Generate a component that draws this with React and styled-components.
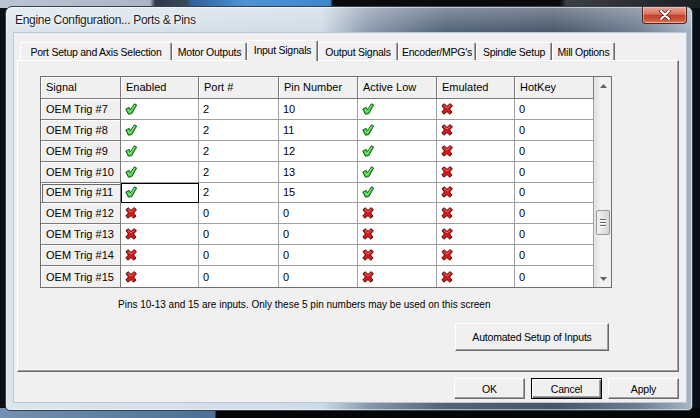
import styled, { createGlobalStyle } from 'styled-components'

const GlobalStyle = createGlobalStyle`
  html, body { margin: 0; padding: 0; }
  body {
    width: 700px;
    height: 418px;
    overflow: hidden;
    background: #0b0f16;
    font-family: "Liberation Sans", Arial, sans-serif;
  }
`

// the blurred desktop behind the dialog
const Desktop = styled.div`
  width: 700px;
  height: 418px;
  box-sizing: border-box;
  padding: 6px 0 0 5px;
  background:
    linear-gradient(to right, #b9c5d2 0, #a9b6c5 150px, #2e3a4a 155px, #3a475a 188px,
      #2f5f9a 190px, #4f93d4 245px, #3f86cc 330px, #0a0b0e 333px, #0a0a0c 560px,
      #3b3f46 566px, #1c1e22 700px) top / 100% 8px no-repeat,
    linear-gradient(to right, #7391b0 0, #4c6f96 215px, #050608 216px) bottom / 100% 10px no-repeat,
    #0b0f16;
`

const Window = styled.div`
  position: relative;
  width: 688px;
  height: 405px;
  box-sizing: border-box;
  display: flex;
  flex-direction: column;
  padding: 0 5px 7px 7px;
  border: 1px solid #34414f;
  border-radius: 7px 7px 5px 5px;
  background:
    linear-gradient(to bottom, rgba(255, 255, 255, 0.3), rgba(255, 255, 255, 0) 26px),
    linear-gradient(to right, #dbe5ee 0%, #cfdbe6 46%, #8797aa 53%, #526378 64%,
      #465669 80%, #6d7d90 92%, #a7b5c4 100%);
  box-shadow: inset 0 0 0 1px rgba(255, 255, 255, 0.5);
`

const TitleBar = styled.div`
  height: 25px;
  display: flex;
  align-items: center;
  padding-left: 2px;
  padding-top: 1px;
  font-size: 12px;
  letter-spacing: -0.3px;
  color: #1b1b1b;
  text-shadow: 0 0 6px #fff, 0 0 3px #fff;
`

const CloseButton = styled.div`
  position: absolute;
  top: 0;
  right: 5px;
  width: 45px;
  height: 17px;
  box-sizing: border-box;
  display: flex;
  align-items: center;
  justify-content: center;
  border: 1px solid #4e2520;
  border-top: none;
  border-radius: 0 0 4px 4px;
  background: linear-gradient(to bottom, #e9a898 0%, #d9735f 45%, #c2402a 52%, #d25a40 85%, #e08a6e 100%);
  box-shadow: inset 0 0 0 1px rgba(255, 220, 210, 0.45);
`

const Client = styled.div`
  flex: 1;
  display: flex;
  flex-direction: column;
  box-sizing: border-box;
  padding: 7px 7px 3px 3px;
  background: #f0f0f0;
  border: 1px solid #bac7d4;
`

const TabStrip = styled.div`
  display: flex;
  align-items: flex-end;
  height: 20px;
  margin-left: 3px;
  position: relative;
  z-index: 1;
`

const Tab = styled.div`
  width: ${(p) => p.$w}px;
  height: ${(p) => (p.$active ? 21 : 18)}px;
  margin-bottom: ${(p) => (p.$active ? -1 : 0)}px;
  box-sizing: border-box;
  display: flex;
  justify-content: center;
  padding-top: 3px;
  font-size: 10.5px;
  letter-spacing: -0.25px;
  color: #000;
  background: #f0f0f0;
  border-top: 1px solid #fff;
  border-left: 1px solid #fff;
  border-right: 1px solid #696969;
  border-radius: 2px 2px 0 0;
  box-shadow: inset -1px 0 #a0a0a0;
`

const Panel = styled.div`
  height: 312px;
  box-sizing: border-box;
  display: flex;
  flex-direction: column;
  padding: 15px 0 0 22px;
  background: #f0f0f0;
  border: 1px solid;
  border-color: #fff #696969 #696969 #fff;
  box-shadow: inset -1px -1px #a0a0a0;
`

const Content = styled.div`
  width: 572px;
  display: flex;
  flex-direction: column;
`

const Grid = styled.div`
  display: flex;
  height: 212px;
  box-sizing: border-box;
  border: 1px solid #6f6f6f;
  background: #fff;
`

const Rows = styled.div`
  width: 553px;
  display: flex;
  flex-direction: column;
`

const Row = styled.div`
  display: grid;
  grid-template-columns: 80px 78px 80px 79px 79px 78px 79px;
  height: ${(p) => (p.$head ? 22 : 21)}px;
  &:last-child > * { border-bottom: none; }
`

const Cell = styled.div`
  box-sizing: border-box;
  display: flex;
  align-items: center;
  padding-left: 4px;
  font-size: 11px;
  color: #000;
  white-space: nowrap;
  border-right: 1px solid ${(p) => (p.$focus ? '#000' : '#a0a0a0')};
  border-bottom: 1px solid ${(p) => (p.$focus ? '#000' : '#a0a0a0')};
  box-shadow: ${(p) => (p.$focus ? 'inset 1px 1px #000' : 'none')};
`

const HeadCell = styled(Cell)`
  padding-left: 5px;
  background: #f0f0f0;
  border-right-color: #7a7a7a;
  border-bottom-color: #7a7a7a;
  box-shadow: inset 1px 1px #fff${(p) => (p.$selected ? ', inset 1px 1px 0 1px #6a6a6a' : '')};
`

const Scrollbar = styled.div`
  width: 17px;
  display: flex;
  flex-direction: column;
  background: linear-gradient(to right, #e2e2e2, #f4f4f4 40%, #efefef);
  border-left: 1px solid #e6e6e6;
  box-sizing: border-box;
`

const ScrollArrow = styled.div`
  height: 17px;
  display: flex;
  align-items: center;
  justify-content: center;
`

const ScrollTrack = styled.div`
  flex: 1;
  display: flex;
  flex-direction: column;
  align-items: center;
`

const Thumb = styled.div`
  width: 14px;
  height: 25px;
  box-sizing: border-box;
  display: flex;
  flex-direction: column;
  align-items: center;
  justify-content: center;
  gap: 2px;
  border: 1px solid #979797;
  border-radius: 2px;
  background: linear-gradient(to right, #f2f2f2, #e4e4e4 50%, #d6d6d6);
  & > span {
    width: 6px;
    height: 1px;
    background: #666;
    box-shadow: 0 1px #fff;
  }
`

const Note = styled.div`
  margin: 10px 0 0 78px;
  height: 14px;
  line-height: 14px;
  font-size: 10px;
  color: #000;
  white-space: nowrap;
`

const Button = styled.button`
  width: ${(p) => p.$w || 71}px;
  height: ${(p) => p.$h || 21}px;
  box-sizing: border-box;
  padding: 0;
  font-family: "Liberation Sans", Arial, sans-serif;
  font-size: 10.5px;
  letter-spacing: -0.2px;
  color: #000;
  background: #f0f0f0;
  border: 1px solid;
  border-color: ${(p) => (p.$default ? '#000' : '#fff #696969 #696969 #fff')};
  box-shadow: ${(p) =>
    p.$default ? 'inset 1px 1px #fff, inset -1px -1px #696969, inset -2px -2px #a0a0a0' : 'inset -1px -1px #a0a0a0'};
`

const SetupButton = styled(Button)`
  align-self: flex-end;
  margin: 11px 3px 0 0;
`

const ButtonRow = styled.div`
  display: flex;
  justify-content: flex-end;
  gap: 6px;
  margin-top: 6px;
`

const Check = () => (
  <svg width="12" height="12" viewBox="0 0 12 12">
    <path d="M0.8 6 L4.2 4.4 L5.6 6.8 L9.4 0.8 L11.6 2 L6.8 10.6 L3.4 11.2 Z" fill="#3fcd3f" stroke="#165a16" strokeWidth="1" strokeLinejoin="round" />
    <path d="M2.6 6.4 L4.8 9.2 L9.8 2" fill="none" stroke="#a4f2a4" strokeWidth="0.8" />
  </svg>
)

const Cross = () => (
  <svg width="12" height="12" viewBox="0 0 12 12">
    <path d="M1 2.6 L3.2 0.8 L6 3.4 L9.2 0.6 L11.4 2.8 L8.6 6 L11 9.2 L8.8 11.2 L6 8.6 L3 11.2 L0.8 9 L3.4 6 Z" fill="#d3191b" stroke="#5c0808" strokeWidth="1" strokeLinejoin="round" />
    <path d="M2.8 2.4 L6 5 L9.2 2.2" fill="none" stroke="#f27a7a" strokeWidth="0.8" />
  </svg>
)

const Arrow = ({ up }) => (
  <svg width="7" height="4" viewBox="0 0 7 4">
    <path d={up ? 'M0 4 L3.5 0 L7 4 Z' : 'M0 0 L3.5 4 L7 0 Z'} fill="#606060" />
  </svg>
)

const CloseX = () => (
  <svg width="12" height="10" viewBox="0 0 12 10">
    <path d="M2 1 L10 9 M10 1 L2 9" stroke="#5a1a14" strokeWidth="3.6" strokeLinecap="round" />
    <path d="M2 1 L10 9 M10 1 L2 9" stroke="#fff" strokeWidth="2.2" strokeLinecap="round" />
  </svg>
)

const tabs = [
  { label: 'Port Setup and Axis Selection', w: 152 },
  { label: 'Motor Outputs', w: 75 },
  { label: 'Input Signals', w: 71, active: true },
  { label: 'Output Signals', w: 80 },
  { label: "Encoder/MPG's", w: 78 },
  { label: 'Spindle Setup', w: 76 },
  { label: 'Mill Options', w: 63 },
]

const columns = ['Signal', 'Enabled', 'Port #', 'Pin Number', 'Active Low', 'Emulated', 'HotKey']

const signals = [
  { n: 7, on: true, port: 2, pin: 10 },
  { n: 8, on: true, port: 2, pin: 11 },
  { n: 9, on: true, port: 2, pin: 12 },
  { n: 10, on: true, port: 2, pin: 13 },
  { n: 11, on: true, port: 2, pin: 15, focus: true },
  { n: 12, on: false, port: 0, pin: 0 },
  { n: 13, on: false, port: 0, pin: 0 },
  { n: 14, on: false, port: 0, pin: 0 },
  { n: 15, on: false, port: 0, pin: 0 },
]

export default function App() {
  return (
    <>
      <GlobalStyle />
      <Desktop>
        <Window>
          <TitleBar>Engine Configuration... Ports &amp; Pins</TitleBar>
          <CloseButton>
            <CloseX />
          </CloseButton>
          <Client>
            <TabStrip>
              {tabs.map((t) => (
                <Tab key={t.label} $w={t.w} $active={t.active}>
                  {t.label}
                </Tab>
              ))}
            </TabStrip>
            <Panel>
              <Content>
                <Grid>
                  <Rows>
                    <Row $head>
                      {columns.map((c) => (
                        <HeadCell key={c}>{c}</HeadCell>
                      ))}
                    </Row>
                    {signals.map((s) => (
                      <Row key={s.n}>
                        <HeadCell $selected={s.focus}>OEM Trig #{s.n}</HeadCell>
                        <Cell $focus={s.focus}>{s.on ? <Check /> : <Cross />}</Cell>
                        <Cell>{s.port}</Cell>
                        <Cell>{s.pin}</Cell>
                        <Cell>{s.on ? <Check /> : <Cross />}</Cell>
                        <Cell>
                          <Cross />
                        </Cell>
                        <Cell>0</Cell>
                      </Row>
                    ))}
                  </Rows>
                  <Scrollbar>
                    <ScrollArrow>
                      <Arrow up />
                    </ScrollArrow>
                    <ScrollTrack>
                      <Thumb style={{ marginTop: 116 }}>
                        <span />
                        <span />
                        <span />
                      </Thumb>
                    </ScrollTrack>
                    <ScrollArrow>
                      <Arrow />
                    </ScrollArrow>
                  </Scrollbar>
                </Grid>
                <Note>Pins 10-13 and 15 are inputs. Only these 5 pin numbers may be used on this screen</Note>
                <SetupButton $w={154} $h={28}>
                  Automated Setup of Inputs
                </SetupButton>
              </Content>
            </Panel>
            <ButtonRow>
              <Button>OK</Button>
              <Button $default>Cancel</Button>
              <Button>Apply</Button>
            </ButtonRow>
          </Client>
        </Window>
      </Desktop>
    </>
  )
}
